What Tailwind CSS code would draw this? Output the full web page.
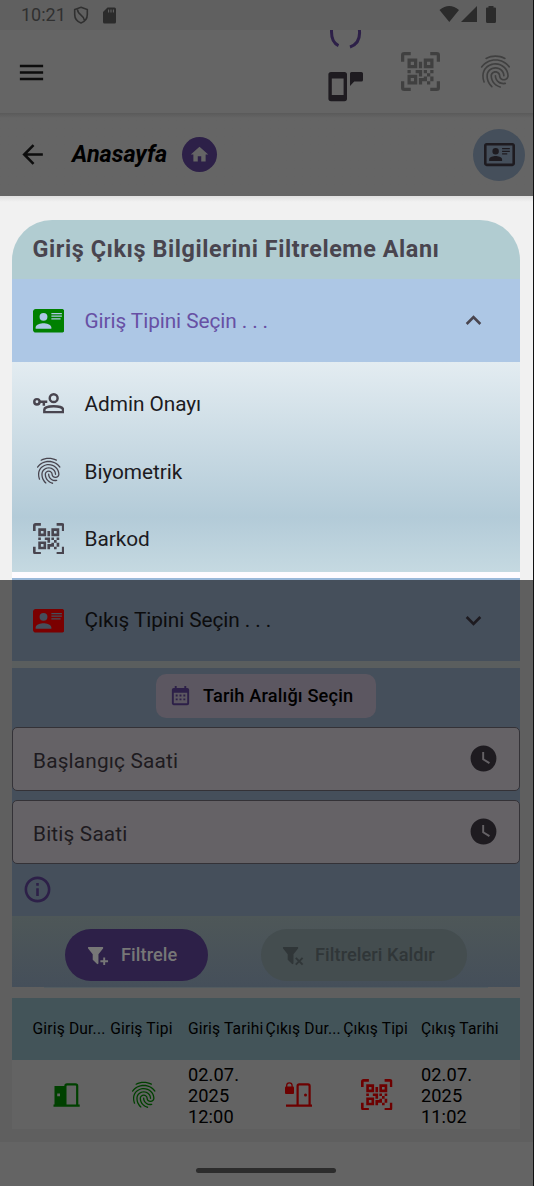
<!DOCTYPE html>
<html lang="tr">
<head>
<meta charset="utf-8">
<title>Anasayfa</title>
<script src="https://cdn.jsdelivr.net/npm/@tailwindcss/browser@4"></script>
</head>
<body class="w-[534px] h-[1186px] overflow-hidden bg-[#5f5f5f] font-['Roboto',sans-serif] text-black">
<svg class="hidden">
  <symbol id="menu" viewBox="0 0 24 24"><path d="M3,6H21V8H3V6M3,11H21V13H3V11M3,16H21V18H3V16Z"/></symbol>
  <symbol id="back" viewBox="0 0 24 24"><path d="M20,11V13H8L13.5,18.5L12.08,19.92L4.16,12L12.08,4.08L13.5,5.5L8,11H20Z"/></symbol>
  <symbol id="home" viewBox="0 0 24 24"><path d="M10,20V14H14V20H19V12H22L12,3L2,12H5V20H10Z"/></symbol>
  <symbol id="card" viewBox="0 0 24 24"><path d="M2,3H22C23.05,3 24,3.95 24,5V19C24,20.05 23.05,21 22,21H2C0.95,21 0,20.05 0,19V5C0,3.95 0.95,3 2,3M14,6V7H22V6H14M14,8V9H21.5L22,9V8H14M14,10V11H21V10H14M8,13.91C6,13.91 2,15 2,17V18H14V17C14,15 10,13.91 8,13.91M8,6A3,3 0 0,0 5,9A3,3 0 0,0 8,12A3,3 0 0,0 11,9A3,3 0 0,0 8,6Z"/></symbol>
  <symbol id="card-outline" viewBox="0 0 24 24"><path d="M22,3H2C0.91,3.04 0.04,3.91 0,5V19C0.04,20.09 0.91,20.96 2,21H22C23.09,20.96 23.96,20.09 24,19V5C23.96,3.91 23.09,3.04 22,3M22,19H2V5H22V19M14,17V15.75C14,14.09 10.66,13.25 9,13.25C7.34,13.25 4,14.09 4,15.75V17H14M9,7A2.5,2.5 0 0,0 6.5,9.5A2.5,2.5 0 0,0 9,12A2.5,2.5 0 0,0 11.5,9.5A2.5,2.5 0 0,0 9,7M14,7V8H20V7H14M14,9V10H20V9H14M14,11V12H18V11H14"/></symbol>
  <symbol id="qr" viewBox="0 0 24 24"><path d="M4,4H10V10H4V4M20,4V10H14V4H20M14,15H16V13H14V11H16V13H18V11H20V13H18V15H20V18H18V20H16V18H13V20H11V16H14V15M16,15V18H18V15H16M4,20V14H10V20H4M6,6V8H8V6H6M16,6V8H18V6H16M6,16V18H8V16H6M4,11H6V13H4V11M9,11H13V15H11V13H9V11M11,6H13V10H11V6M2,2V6H0V2A2,2 0 0,1 2,0H6V2H2M22,0A2,2 0 0,1 24,2V6H22V2H18V0H22M2,18V22H6V24H2A2,2 0 0,1 0,22V18H2M22,22V18H24V22A2,2 0 0,1 22,24H18V22H22Z"/></symbol>
  <symbol id="finger" viewBox="0 0 24 24"><path d="M17.81,4.47C17.73,4.47 17.65,4.45 17.58,4.41C15.66,3.42 14,3 12,3C10.03,3 8.15,3.47 6.44,4.41C6.2,4.54 5.9,4.45 5.76,4.21C5.63,3.97 5.72,3.66 5.96,3.53C7.82,2.5 9.86,2 12,2C14.14,2 16,2.47 18.04,3.5C18.29,3.65 18.38,3.95 18.25,4.19C18.16,4.37 18,4.47 17.81,4.47M3.5,9.72C3.4,9.72 3.3,9.69 3.21,9.63C3,9.47 2.93,9.16 3.09,8.93C4.08,7.53 5.34,6.43 6.84,5.66C10,4.04 14,4.03 17.15,5.65C18.65,6.42 19.91,7.5 20.9,8.9C21.06,9.12 21,9.44 20.78,9.6C20.55,9.76 20.24,9.71 20.08,9.5C19.18,8.22 18.04,7.23 16.69,6.54C13.82,5.07 10.15,5.07 7.29,6.55C5.93,7.25 4.79,8.25 3.89,9.5C3.81,9.65 3.66,9.72 3.5,9.72M9.75,21.79C9.62,21.79 9.5,21.74 9.4,21.64C8.53,20.77 8.06,20.21 7.39,19C6.7,17.77 6.34,16.27 6.34,14.66C6.34,11.69 8.88,9.27 12,9.27C15.12,9.27 17.66,11.69 17.66,14.66A0.5,0.5 0 0,1 17.16,15.16A0.5,0.5 0 0,1 16.66,14.66C16.66,12.24 14.57,10.27 12,10.27C9.43,10.27 7.34,12.24 7.34,14.66C7.34,16.1 7.66,17.43 8.27,18.5C8.91,19.66 9.35,20.15 10.12,20.93C10.31,21.13 10.31,21.44 10.12,21.64C10,21.74 9.88,21.79 9.75,21.79M16.92,19.94C15.73,19.94 14.68,19.64 13.82,19.05C12.33,18.04 11.44,16.4 11.44,14.66A0.5,0.5 0 0,1 11.94,14.16A0.5,0.5 0 0,1 12.44,14.66C12.44,16.07 13.16,17.4 14.38,18.22C15.09,18.7 15.92,18.93 16.92,18.93C17.16,18.93 17.56,18.9 17.96,18.83C18.23,18.78 18.5,18.96 18.54,19.24C18.59,19.5 18.41,19.77 18.13,19.82C17.56,19.93 17.06,19.94 16.92,19.94M14.91,22C14.87,22 14.82,22 14.78,22C13.19,21.54 12.15,20.95 11.06,19.88C9.66,18.5 8.89,16.64 8.89,14.66C8.89,13.04 10.27,11.72 11.97,11.72C13.67,11.72 15.05,13.04 15.05,14.66C15.05,15.73 16,16.6 17.13,16.6C18.28,16.6 19.21,15.73 19.21,14.66C19.21,10.89 15.96,7.83 11.96,7.83C9.12,7.83 6.5,9.41 5.35,11.86C4.96,12.67 4.76,13.62 4.76,14.66C4.76,15.44 4.83,16.67 5.43,18.27C5.53,18.53 5.4,18.82 5.14,18.91C4.88,19 4.59,18.87 4.5,18.62C4,17.31 3.77,16 3.77,14.66C3.77,13.46 4,12.37 4.45,11.42C5.78,8.63 8.73,6.82 11.96,6.82C16.5,6.82 20.21,10.33 20.21,14.65C20.21,16.27 18.83,17.59 17.13,17.59C15.43,17.59 14.05,16.27 14.05,14.65C14.05,13.58 13.12,12.71 11.97,12.71C10.82,12.71 9.89,13.58 9.89,14.65C9.89,16.36 10.55,17.96 11.76,19.16C12.71,20.1 13.62,20.62 15.03,21C15.3,21.08 15.45,21.36 15.38,21.62C15.33,21.85 15.12,22 14.91,22Z"/></symbol>
  <symbol id="up" viewBox="0 0 24 24"><path d="M7.41,15.41L12,10.83L16.59,15.41L18,14L12,8L6,14L7.41,15.41Z"/></symbol>
  <symbol id="down" viewBox="0 0 24 24"><path d="M7.41,8.58L12,13.17L16.59,8.58L18,10L12,16L6,10L7.41,8.58Z"/></symbol>
  <symbol id="calendar" viewBox="0 0 24 24"><path d="M9,10V12H7V10H9M13,10V12H11V10H13M17,10V12H15V10H17M19,3A2,2 0 0,1 21,5V19A2,2 0 0,1 19,21H5C3.89,21 3,20.1 3,19V5A2,2 0 0,1 5,3H6V1H8V3H16V1H18V3H19M19,19V8H5V19H19M9,14V16H7V14H9M13,14V16H11V14H13M17,14V16H15V14H17Z"/></symbol>
  <symbol id="clock" viewBox="0 0 24 24"><path d="M12,2A10,10 0 0,0 2,12A10,10 0 0,0 12,22A10,10 0 0,0 22,12A10,10 0 0,0 12,2M16.2,16.2L11,13V7H12.5V12.2L17,14.9L16.2,16.2Z"/></symbol>
  <symbol id="info" viewBox="0 0 24 24"><path d="M11,9H13V7H11M12,20C7.59,20 4,16.41 4,12C4,7.59 7.59,4 12,4C16.41,4 20,7.59 20,12C20,16.41 16.41,20 12,20M12,2A10,10 0 0,0 2,12A10,10 0 0,0 12,22A10,10 0 0,0 22,12A10,10 0 0,0 12,2M11,17H13V11H11V17Z"/></symbol>
  <symbol id="funnel-plus" viewBox="0 0 24 24"><path d="M13,19.88C13.04,20.18 12.94,20.5 12.71,20.71C12.32,21.1 11.69,21.1 11.3,20.71L7.29,16.7C7.06,16.47 6.96,16.16 7,15.87V10.75L2.21,4.62C1.87,4.19 1.95,3.56 2.38,3.22C2.57,3.08 2.78,3 3,3H17C17.22,3 17.43,3.08 17.62,3.22C18.05,3.56 18.13,4.19 17.79,4.62L13,10.75V19.88M18,14H20V17H23V19H20V22H18V19H15V17H18Z"/></symbol>
  <symbol id="funnel-x" viewBox="0 0 24 24"><path d="M14.73,20.83L17.58,18L14.73,15.17L16.15,13.76L19,16.57L21.8,13.76L23.22,15.17L20.41,18L23.22,20.83L21.8,22.24L19,19.4L16.15,22.24L14.73,20.83M13,19.88C13.04,20.18 12.94,20.5 12.71,20.71C12.32,21.1 11.69,21.1 11.3,20.71L7.29,16.7C7.06,16.47 6.96,16.16 7,15.87V10.75L2.21,4.62C1.87,4.19 1.95,3.56 2.38,3.22C2.57,3.08 2.78,3 3,3H17C17.22,3 17.43,3.08 17.62,3.22C18.05,3.56 18.13,4.19 17.79,4.62L13,10.75V19.88Z"/></symbol>
</svg>

<!-- status bar -->
<header class="flex h-[30px] items-center bg-[#606060] pl-[21px] pr-[37px]">
  <span class="w-[52px] whitespace-nowrap text-[18px] leading-[30px] text-[#303030]">10:21</span>
  <svg class="size-[18px]" viewBox="0 0 18 18" fill="none" stroke="#303030" stroke-width="1.6"><path d="M8 1.300 14.300 3.500V8.500C14.300 12.500 12 15.500 8 17C4 15.500 1.700 12.500 1.700 8.500V3.500ZM4.500 3.500C4.500 9 11 8.500 11.500 14.500"/></svg>
  <svg class="ml-[12px] h-[17px] w-[13px]" viewBox="0 0 13 17"><path fill="#2b2b2b" d="M4.5.5H11.5A1.5 1.5 0 0 1 13 2V15A1.5 1.5 0 0 1 11.5 16.5H1.5A1.5 1.5 0 0 1 0 15V5Z"/><path stroke="#606060" stroke-width="1.1" d="M5.6 2.5V5.5M8 2.5V5.5M10.4 2.5V5.5"/></svg>
  <svg class="ml-auto h-[18px] w-[58px]" viewBox="439 6 58 18" fill="#2b2b2b"><path d="M439.5 10Q449.300 2 459 10L449.300 22ZM477 6V22H461ZM486 8.500Q486 7.500 487 7.500H488.500V6H493.500V7.500H495Q496 7.500 496 8.500V21.500Q496 23 494.500 23H487.500Q486 23 486 21.500Z"/></svg>
</header>

<!-- app bar -->
<div class="flex h-[83px] bg-[#656565] pl-4 pr-[19px]">
  <svg class="mt-[26.5px] size-[31px]" fill="#0d0d0d"><use href="#menu"/></svg>
  <svg class="ml-auto h-[83px] w-[36px]" viewBox="328 30 36 83">
    <g fill="none" stroke="#2d2048" stroke-width="3"><path d="M331.600 29C331 37 333 43 338.500 45.600M359.300 29C360.500 38 357.500 44.500 350 47"/></g>
    <path fill="#1e1b20" fill-rule="evenodd" d="M331 72H344.500Q347 72 347 74.500V98.500Q347 101.200 344.500 101.200H331Q328.400 101.200 328.400 98.500V74.500Q328.400 72 331 72ZM331.800 78.500V95H343.600V78.500ZM351.500 72H361.300Q363 72 363 73.500V80Q363 81.600 361.300 81.600H354.200L350 86V73.500Q350 72 351.500 72Z"/>
  </svg>
  <svg class="ml-[37px] mt-[22px] size-[39px]" fill="#404040"><use href="#qr"/></svg>
  <svg class="ml-[36px] mt-[22px] size-[39px]" fill="#404040"><use href="#finger"/></svg>
</div>

<!-- page title bar -->
<div class="flex h-[83px] items-center bg-[#656565] bg-linear-to-b from-[#5a5a5a] to-[#656565] to-[5px] pl-[17px] pr-[9px]">
  <svg class="size-[31px]" fill="#0d0d0d"><use href="#back"/></svg>
  <h1 class="ml-[24px] w-[110px] whitespace-nowrap pt-px text-[23.4px] font-bold italic">Anasayfa</h1>
  <div class="flex size-[35px] items-center justify-center rounded-full bg-[#2d2048]"><svg class="size-[21px]" fill="#656565"><use href="#home"/></svg></div>
  <div class="ml-auto flex size-[52px] items-center justify-center rounded-full bg-[#454f5b]"><svg class="size-[31px]" fill="#1e1b20"><use href="#card-outline"/></svg></div>
</div>

<!-- highlighted filter section -->
<section class="h-[384px] bg-[#f1f1f1] bg-linear-to-b from-[#e0e0e0] to-[#f1f1f1] to-[6px] px-3 pr-[14px] pt-[24px]">
  <h2 class="flex h-[59px] items-center whitespace-nowrap rounded-t-[40px] bg-[#b1ccd1] pl-[20.5px] pt-px text-[23.4px] font-bold tracking-[0.57px] text-[#49454f]">Giriş Çıkış Bilgilerini Filtreleme Alanı</h2>
  <div class="flex h-[83px] items-center bg-[#adc7e5] pl-[20.5px] pr-[20px] text-[20.8px] tracking-[-0.08px] text-[#6750a4]">
    <svg class="mr-[20.5px] size-[31.5px]" fill="#008000"><use href="#card"/></svg><span class="pt-[3px]">Giriş Tipini Seçin . . .</span>
    <svg class="ml-auto mr-[11px] size-[31px]" fill="#49454f"><use href="#up"/></svg>
  </div>
  <div class="flex h-[210px] flex-col bg-linear-to-b from-[#e3ecf1] via-[#b3cbd8] via-[74%] to-[#c5d9e1] pl-[20.5px] pr-[20px] pt-2 text-[20.8px] tracking-[-0.05px] text-[#1c1b1f]">
    <div class="flex h-[67px] items-center"><svg class="mr-[20.5px] size-[31.5px]" viewBox="32.500 387 32 32" fill="none" stroke="#49454f" stroke-width="2.500"><circle cx="36.500" cy="401" r="2.700"/><path d="M39.500 401H47M43.500 401V405"/><circle cx="53.500" cy="397.300" r="4"/><path d="M44 411.500V409C44 404.500 63 404.500 63 409V411.500Z"/></svg><span class="pt-[2px]">Admin Onayı</span></div>
    <div class="flex h-[68px] items-center"><svg class="mr-[20.5px] size-[31.5px]" fill="#49454f"><use href="#finger"/></svg><span class="pt-[3px]">Biyometrik</span></div>
    <div class="flex h-[67px] items-center"><svg class="mr-[20.5px] size-[31.5px]" fill="#49454f"><use href="#qr"/></svg><span class="pt-[2px]">Barkod</span></div>
  </div>
  <div class="h-[6px] bg-[#fffbff]"></div>
  <div class="h-[2px] bg-[#9ab8d9]"></div>
</section>

<!-- dimmed filter controls -->
<section class="ml-3 w-[508px]">
  <div class="flex h-[81px] items-center bg-[#454f5b] pl-[20.5px] pr-[20px] text-[20.8px] tracking-[-0.08px] text-[#0c0c0d]">
    <svg class="mr-[20.5px] size-[31.5px]" fill="#7b0000"><use href="#card"/></svg><span class="pt-px">Çıkış Tipini Seçin . . .</span>
    <svg class="ml-auto mr-[11px] size-[31px]" fill="#1e1b20"><use href="#down"/></svg>
  </div>
  <div class="h-[7px] bg-[#5a5e5e]"></div>
  <div class="h-[248px] bg-[#454f5b] pt-[6px]">
    <div class="mx-auto flex h-[44px] w-[220px] items-center rounded-[10px] bg-[#5c5761] pl-[13px] text-[18.2px] font-medium tracking-[0.15px]"><svg class="mr-[11px] size-[23px]" fill="#2d2048"><use href="#calendar"/></svg><span class="whitespace-nowrap">Tarih Aralığı Seçin</span></div>
    <div class="mt-[9px] flex h-[64px] items-center justify-between rounded-[5px] border border-[#343237] bg-[#656266] px-[20px] text-[20.8px] tracking-[0.18px] text-[#1e1b20]"><span class="mt-[5px]">Başlangıç Saati</span><svg class="mb-px size-[31px]" fill="#1e1b20"><use href="#clock"/></svg></div>
    <div class="mt-[9px] flex h-[64px] items-center justify-between rounded-[5px] border border-[#343237] bg-[#656266] px-[20px] text-[20.8px] tracking-[0.18px] text-[#1e1b20]"><span class="mt-[5px]">Bitiş Saati</span><svg class="mb-px size-[31px]" fill="#1e1b20"><use href="#clock"/></svg></div>
    <svg class="ml-[10px] mt-[10px] size-[31px]" fill="#2d2048"><use href="#info"/></svg>
  </div>
  <div class="flex h-[71px] items-start bg-linear-to-b from-[#4e5758] to-[#454f5a] pl-[53px] pt-[13px] text-[18.2px] font-medium tracking-[0.07px]">
    <div class="flex h-[52px] w-[143px] items-center rounded-full bg-[#2d2048] pl-[21px] text-[#777777]"><svg class="mr-[12px] size-[23px]" fill="#777777"><use href="#funnel-plus"/></svg>Filtrele</div>
    <div class="ml-[53px] flex h-[52px] w-[206px] items-center rounded-full bg-[#444d4f] pl-[20px] text-[#303638]"><svg class="mr-[11px] size-[23px]" fill="#303638"><use href="#funnel-x"/></svg><span class="whitespace-nowrap">Filtreleri Kaldır</span></div>
  </div>
  <div class="mx-[32px] h-px bg-[#525b60]"></div>

  <!-- records table -->
  <div class="mt-[10px] grid h-[62px] grid-cols-[77.7px_77.7px_77.7px_77.7px_77.7px_77.7px] items-center whitespace-nowrap bg-[#435459] pl-[20.5px] pt-[2px] text-[15.6px] tracking-[0.17px]">
    <span>Giriş Dur...</span><span>Giriş Tipi</span><span>Giriş Tarihi</span><span>Çıkış Dur...</span><span>Çıkış Tipi</span><span>Çıkış Tarihi</span>
  </div>
  <div class="grid h-[69px] grid-cols-[77.7px_77.7px_77.7px_77.7px_77.7px_77.7px] items-center bg-[#636363] pl-[20.5px] text-[18.2px] leading-[21.3px] tracking-[0.12px]">
    <svg class="ml-[17px] size-[32px]" viewBox="50 1079 32 32" fill="none" stroke="#004100" stroke-width="2.200"><path fill="#004100" fill-rule="evenodd" stroke="none" d="M54.500 1086H65.500V1106H54.500ZM57.200 1093.500V1096.300H60V1093.500Z"/><path d="M53.500 1105.700H79.700M65.400 1105V1086Q65.400 1084.400 67 1084.400H75.500Q77.200 1084.400 77.200 1086V1105"/></svg>
    <svg class="ml-[18px] size-[31.5px]" fill="#004100"><use href="#finger"/></svg>
    <span class="pt-[2px]">02.07.<br>2025<br>12:00</span>
    <svg class="ml-[16px] size-[32px]" viewBox="283 1079 32 32" fill="none" stroke="#6d0000" stroke-width="2.200"><path d="M287 1105.700H313M298.600 1105V1086Q298.600 1084.400 300.200 1084.400H309Q310.600 1084.400 310.600 1086V1105"/><rect x="286" y="1086.500" width="9" height="7.500" rx="1" fill="#6d0000" stroke="none"/><path stroke-width="1.300" d="M287.700 1087V1085.500A2.700 2.700 0 0 1 293.100 1085.500V1087"/><circle cx="306.500" cy="1095" r="1.500" fill="#6d0000" stroke="none"/></svg>
    <svg class="ml-[18px] size-[31.5px]" fill="#6d0000"><use href="#qr"/></svg>
    <span class="pt-[2px]">02.07.<br>2025<br>11:02</span>
  </div>
</section>
<div class="mt-[13px] flex h-[44px] justify-center bg-[#646464] pr-[2px] pt-[26px]"><div class="h-[5px] w-[140px] rounded-full bg-[#2c2c2c]"></div></div>
<div class="absolute right-0 top-0 h-[1186px] w-px bg-[#111]"></div>
</body>
</html>
